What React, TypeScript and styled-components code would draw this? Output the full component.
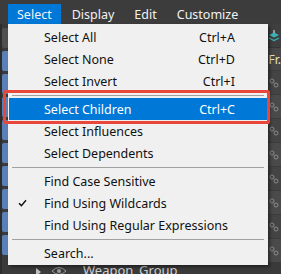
import styled, { createGlobalStyle } from 'styled-components';

const GlobalStyle = createGlobalStyle`
  html, body {
    margin: 0;
    padding: 0;
    background: #444444;
  }
  body {
    font-family: "Noto Sans", "Noto Sans CJK SC", sans-serif;
  }
`;

type Item =
  | { kind: 'item'; label: string; shortcut?: string; checked?: boolean; active?: boolean }
  | { kind: 'sep' };

const items: Item[] = [
  { kind: 'item', label: 'Select All', shortcut: 'Ctrl+A' },
  { kind: 'item', label: 'Select None', shortcut: 'Ctrl+D' },
  { kind: 'item', label: 'Select Invert', shortcut: 'Ctrl+I' },
  { kind: 'sep' },
  { kind: 'item', label: 'Select Children', shortcut: 'Ctrl+C', active: true },
  { kind: 'item', label: 'Select Influences' },
  { kind: 'item', label: 'Select Dependents' },
  { kind: 'sep' },
  { kind: 'item', label: 'Find Case Sensitive' },
  { kind: 'item', label: 'Find Using Wildcards', checked: true },
  { kind: 'item', label: 'Find Using Regular Expressions' },
  { kind: 'sep' },
  { kind: 'item', label: 'Search...' },
];

const menus = ['Select', 'Display', 'Edit', 'Customize'];

const CheckIcon = () => (
  <svg width="9" height="8" viewBox="0 0 9 8">
    <path d="M1 4.2 L3.4 6.6 L8 1.2" fill="none" stroke="#111" strokeWidth="1.4" />
  </svg>
);

const NodeIcon = () => (
  <svg width="10" height="10" viewBox="0 0 10 10">
    <circle cx="3" cy="3" r="2" fill="none" stroke="#8a8a8a" strokeWidth="1" />
    <circle cx="7" cy="7" r="2" fill="none" stroke="#8a8a8a" strokeWidth="1" />
    <path d="M4.5 4.5 L5.5 5.5" stroke="#8a8a8a" />
  </svg>
);

const LayerIcon = () => (
  <svg width="12" height="12" viewBox="0 0 12 12">
    <path d="M1 5 L6 2.5 L11 5 L6 7.5 Z" fill="#3bb3b8" />
    <path d="M1 8 L6 10.5 L11 8" fill="none" stroke="#3bb3b8" strokeWidth="1.2" />
    <path d="M6 0 V3" stroke="#d0d0d0" strokeWidth="1.2" />
  </svg>
);

const EyeIcon = () => (
  <svg width="16" height="10" viewBox="0 0 16 10">
    <path d="M1 5 Q8 -2 15 5 Q8 12 1 5 Z" fill="none" stroke="#9a9a9a" strokeWidth="1" />
    <circle cx="8" cy="5" r="2" fill="#9a9a9a" />
  </svg>
);

const App = () => {
  return (
    <Screen>
      <GlobalStyle />
      <MenuBar>
        {menus.map((m, i) => (
          <BarItem key={m} $open={i === 0}>
            {m}
          </BarItem>
        ))}
      </MenuBar>
      <Workspace>
        <ToolStrip>
          {Array.from({ length: 10 }).map((_, i) => (
            <ToolButton key={i} $plain={i === 0} />
          ))}
        </ToolStrip>
        <ListArea>
          <IconBar>
            <LayerIcon />
          </IconBar>
          <ListHeader>Fr.</ListHeader>
          {Array.from({ length: 8 }).map((_, i) => (
            <ListRow key={i} $odd={i % 2 === 1}>
              <RowIcon>
                <NodeIcon />
              </RowIcon>
            </ListRow>
          ))}
          <NameRow>
            <Twisty />
            <EyeIcon />
            <RowName>Weapon_Group</RowName>
          </NameRow>
        </ListArea>
      </Workspace>

      <Dropdown>
        {items.map((it, i) =>
          it.kind === 'sep' ? (
            <Separator key={i} />
          ) : (
            <MenuRow key={i} $active={!!it.active}>
              <CheckCell>{it.checked && <CheckIcon />}</CheckCell>
              <Label>{it.label}</Label>
              <Shortcut>{it.shortcut}</Shortcut>
            </MenuRow>
          )
        )}
      </Dropdown>
      <Callout />
    </Screen>
  );
};

export default App;

const Screen = styled.div`
  position: relative;
  width: 281px;
  height: 274px;
  overflow: hidden;
  background: #444444;
`;

const MenuBar = styled.div`
  height: 24px;
  display: flex;
  align-items: flex-end;
  padding-left: 8px;
  background: #3c3c3c;
  box-sizing: border-box;
`;

const BarItem = styled.div<{ $open: boolean }>`
  height: 20px;
  padding: 0 9px;
  margin-right: 2px;
  display: flex;
  align-items: center;
  font-size: 12.5px;
  color: #f2f2f2;
  background: ${(p) => (p.$open ? '#0078d7' : 'transparent')};
`;

const Workspace = styled.div`
  display: flex;
  height: 250px;
`;

const ToolStrip = styled.div`
  width: 8px;
  flex-shrink: 0;
  display: flex;
  flex-direction: column;
  gap: 3px;
  padding-top: 4px;
  border-left: 2px solid #2d2d2d;
  background: #3a3a3a;
`;

const ToolButton = styled.div<{ $plain: boolean }>`
  width: 7px;
  height: 20px;
  flex-shrink: 0;
  border-radius: 2px 0 0 2px;
  background: ${(p) => (p.$plain ? '#505050' : '#5a80b8')};
`;

const ListArea = styled.div`
  flex: 1;
  display: flex;
  flex-direction: column;
  background: #444444;
`;

const IconBar = styled.div`
  height: 23px;
  flex-shrink: 0;
  display: flex;
  align-items: center;
  justify-content: flex-end;
  padding-right: 1px;
  background: #3f3f3f;
`;

const ListHeader = styled.div`
  height: 22px;
  flex-shrink: 0;
  display: flex;
  align-items: center;
  justify-content: flex-end;
  font-size: 12px;
  color: #e8e2c0;
  background: #474747;
  border-top: 1px solid #353535;
`;

const ListRow = styled.div<{ $odd: boolean }>`
  height: 23px;
  flex-shrink: 0;
  display: flex;
  align-items: center;
  justify-content: flex-end;
  padding-right: 2px;
  background: ${(p) => (p.$odd ? '#4a4a4a' : '#444444')};
  border-top: 1px solid #3c3c3c;
`;

const NameRow = styled.div`
  height: 24px;
  flex-shrink: 0;
  display: flex;
  align-items: flex-start;
  gap: 10px;
  padding-left: 26px;
  padding-top: 4px;
  box-sizing: border-box;
  background: #3a3a3a;
`;

const Twisty = styled.div`
  width: 0;
  height: 0;
  margin-top: 2px;
  border-left: 5px solid #bdbdbd;
  border-top: 4px solid transparent;
  border-bottom: 4px solid transparent;
`;

const RowName = styled.div`
  margin-left: 6px;
  margin-top: -4px;
  font-size: 13px;
  line-height: 16px;
  color: #cfcfcf;
`;

const RowIcon = styled.div`
  width: 10px;
  display: flex;
`;

const Dropdown = styled.div`
  position: absolute;
  left: 8px;
  top: 24px;
  width: 260px;
  padding: 2px 0 1px;
  box-sizing: border-box;
  background: #f0f0f0;
  box-shadow: 2px 2px 3px rgba(0, 0, 0, 0.45);
  font-size: 12.5px;
  color: #111;
`;

const MenuRow = styled.div<{ $active: boolean }>`
  height: 22px;
  margin: 0 1px;
  display: flex;
  align-items: center;
  background: ${(p) => (p.$active ? '#0078d7' : 'transparent')};
  color: ${(p) => (p.$active ? '#ffffff' : '#111111')};
`;

const CheckCell = styled.div`
  width: 35px;
  flex-shrink: 0;
  box-sizing: border-box;
  display: flex;
  padding-left: 9px;
`;

const Label = styled.span`
  flex: 1;
`;

const Shortcut = styled.span`
  padding-right: 32px;
`;

const Separator = styled.div`
  height: 1px;
  margin: 3px 4px 2px;
  background: #a0a0a0;
`;

const Callout = styled.div`
  position: absolute;
  left: 3px;
  top: 90px;
  width: 267px;
  height: 34px;
  box-sizing: border-box;
  border: 3px solid #e8473c;
  border-radius: 2px;
`;
